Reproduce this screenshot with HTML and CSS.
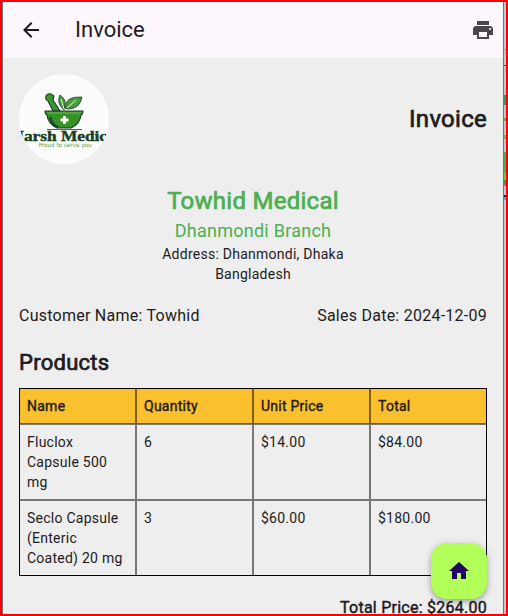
FILE: index.html
```
<!DOCTYPE html>
<html lang="en">
<head>
<meta charset="utf-8">
<title>Invoice</title>
<link rel="stylesheet" href="styles.css">
</head>
<body>
<div class="window">
  <div class="app">
    <header class="bar">
      <svg class="icon back" viewBox="0 0 24 24"><path d="M20 11H7.83l5.59-5.59L12 4l-8 8 8 8 1.41-1.41L7.83 13H20v-2z"/></svg>
      <h1 class="title">Invoice</h1>
      <svg class="icon print" viewBox="0 0 24 24"><path d="M19 8H5c-1.66 0-3 1.34-3 3v6h4v4h12v-4h4v-6c0-1.66-1.34-3-3-3zm-3 11H8v-5h8v5zm3-7c-.55 0-1-.45-1-1s.45-1 1-1 1 .45 1 1-.45 1-1 1zm-1-9H6v4h12V3z"/></svg>
    </header>
    <main class="content">
      <div class="top">
        <svg class="logo" viewBox="0 0 90 90">
          <defs><clipPath id="round"><circle cx="45" cy="45" r="45"/></clipPath></defs>
          <g clip-path="url(#round)">
            <rect width="90" height="90" fill="#fcfcfc"/>
            <path d="M27 22q1-3 5-2l3 2-1 4 7 11h-7l-5-10q-3-1-2-5z" fill="#3f9434" stroke="#173f25" stroke-width="1.1"/>
            <path d="M41 21q6 4 5 10l-1 5q-8-7-4-15z" fill="#4b9d3b" stroke="#173f25" stroke-width=".8"/>
            <path d="M46 34q0-12 17-11-2 12-14 12z" fill="#4b9d3b" stroke="#173f25" stroke-width=".8"/>
            <path d="M42 25l3 10M48 34l9-8" fill="none" stroke="#e9f4df" stroke-width="1"/>
            <path d="M26 37h38q0 3-2 4-1 9-10 13H38q-9-4-10-13-2-1-2-4z" fill="#379127" stroke="#173f25" stroke-width="1.2"/>
            <path d="M28 39h34" stroke="#9bc777" stroke-width=".7"/>
            <path d="M31 43q2 8 8 10" fill="none" stroke="#173f25" stroke-width="2"/>
            <path d="M28 55.500h35" stroke="#173f25" stroke-width=".8"/>
            <path d="M44 42h3v2.500h2.500v3H47V50h-3v-2.500h-2.500v-3H44z" fill="#fff"/>
            <text class="brand" x="-8.500" y="66.500" textLength="110" lengthAdjust="spacingAndGlyphs">Harsh Medical</text>
            <text class="slogan" x="19.500" y="72.500" textLength="53" lengthAdjust="spacingAndGlyphs">Proud to serve you</text>
          </g>
        </svg>
        <h2 class="heading faux">Invoice</h2>
      </div>
      <div class="company">
        <div class="name faux">Towhid Medical</div>
        <div class="branch">Dhanmondi Branch</div>
        <div class="address">Address: Dhanmondi, Dhaka<br>Bangladesh</div>
      </div>
      <div class="meta"><span>Customer Name: Towhid</span><span>Sales Date: 2024-12-09</span></div>
      <h3 class="products faux">Products</h3>
      <div class="table">
        <div class="row head"><div>Name</div><div>Quantity</div><div>Unit Price</div><div>Total</div></div>
        <div class="row"><div>Fluclox Capsule 500 mg</div><div>6</div><div>$14.00</div><div>$84.00</div></div>
        <div class="row"><div>Seclo Capsule (Enteric Coated) 20 mg</div><div>3</div><div>$60.00</div><div>$180.00</div></div>
      </div>
      <div class="total">Total Price: $264.00</div>
    </main>
    <div class="fab"><svg class="icon" viewBox="0 0 24 24"><path d="M10 20v-6h4v6h5v-8h3L12 3 2 12h3v8z"/></svg></div>
  </div>
  <div class="edge"></div>
</div>
</body>
</html>
```
FILE: styles.css
```
* { box-sizing: border-box; }
body { margin: 0; }
h1, h2, h3 { margin: 0; font-weight: 400; }
.window {
  display: flex;
  width: 508px;
  height: 616px;
  border: 2px solid #f00;
  overflow: hidden;
  font-family: Roboto, "Liberation Sans", sans-serif;
  color: #1d1b20;
}
.app {
  position: relative;
  width: 502px;
  border-left: 1px solid #777;
  border-right: 1px solid #737378;
  background: #eee;
}
.edge {
  width: 2px;
  background: linear-gradient(#c4c4c9 0 47px, #aaa 47px 48px, #c4c4c9 48px 63px, #555 63px 64px, #c4c4c9 64px 93px, #2e9e52 93px 103px, #c4c4c9 103px 116px, #5fae3c 116px 119px, #c4c4c9 119px 133px, #78bd35 133px 137px, #c4c4c9 137px 150px, #4caf50 150px 171px, #7fc72e 171px 178px, #2e9e52 178px 182px, #d2605a 182px 184px, #c4c4c9 184px 193px, #234 193px 195px, #4aa8ee 195px 198px, #c4c4c9 198px);
}
.icon { width: 24px; height: 24px; flex: none; }
.bar {
  display: flex;
  align-items: center;
  height: 56px;
  padding: 0 8px 0 16px;
  background: #fef7ff;
}
.back { fill: #1d1b20; }
.print { fill: #49454f; }
.title { flex: 1; margin-left: 32px; font-size: 22px; line-height: 28px; }
.content { padding: 16px 16px 0; }
.faux { letter-spacing: .27px; -webkit-text-stroke: 0.7px currentColor; }
.top { display: flex; justify-content: space-between; align-items: center; height: 90px; }
.logo { width: 90px; height: 90px; }
.brand { font: 700 14px "Liberation Serif", serif; fill: #173f25; stroke: #173f25; stroke-width: .4px; }
.slogan { font: 6px "DejaVu Sans", sans-serif; fill: #57a044; }
.heading { font-size: 24px; line-height: 32px; }
.company { margin-top: 21px; text-align: center; color: #4caf50; }
.name { font-size: 24px; line-height: 32px; }
.branch { font-size: 18px; line-height: 27px; letter-spacing: .25px; }
.address { font-size: 14px; line-height: 20px; letter-spacing: .25px; color: #1d1b20; }
.meta {
  display: flex;
  justify-content: space-between;
  margin-top: 20px;
  font-size: 16px;
  line-height: 24px;
  letter-spacing: .25px;
}
.products { margin-top: 21px; font-size: 22px; line-height: 28px; }
.table { margin-top: 11px; border: 1px solid #000; font-size: 14px; line-height: 20px; letter-spacing: .25px; }
.row { display: grid; grid-template-columns: 116px 117px 117px 116px; }
.row > div { padding: 7px; border: 1px solid rgba(0, 0, 0, .5); }
.row > div:first-child { border-left: 0; }
.row > div:last-child { border-right: 0; }
.row:first-child > div { border-top: 0; }
.row:last-child > div { border-bottom: 0; }
.head { background: #fbc02d; -webkit-text-stroke: .4px currentColor; }
.total { margin-top: 20px; text-align: right; font-size: 16px; line-height: 24px; letter-spacing: .25px; -webkit-text-stroke: .45px currentColor; }
.fab {
  position: absolute;
  right: 16px;
  bottom: 15px;
  display: grid;
  place-items: center;
  width: 56px;
  height: 56px;
  border-radius: 16px;
  background: #b2ff59;
  box-shadow: 0 3px 5px rgba(0, 0, 0, .22), 0 1px 8px rgba(0, 0, 0, .14);
  fill: #21005d;
}
```
